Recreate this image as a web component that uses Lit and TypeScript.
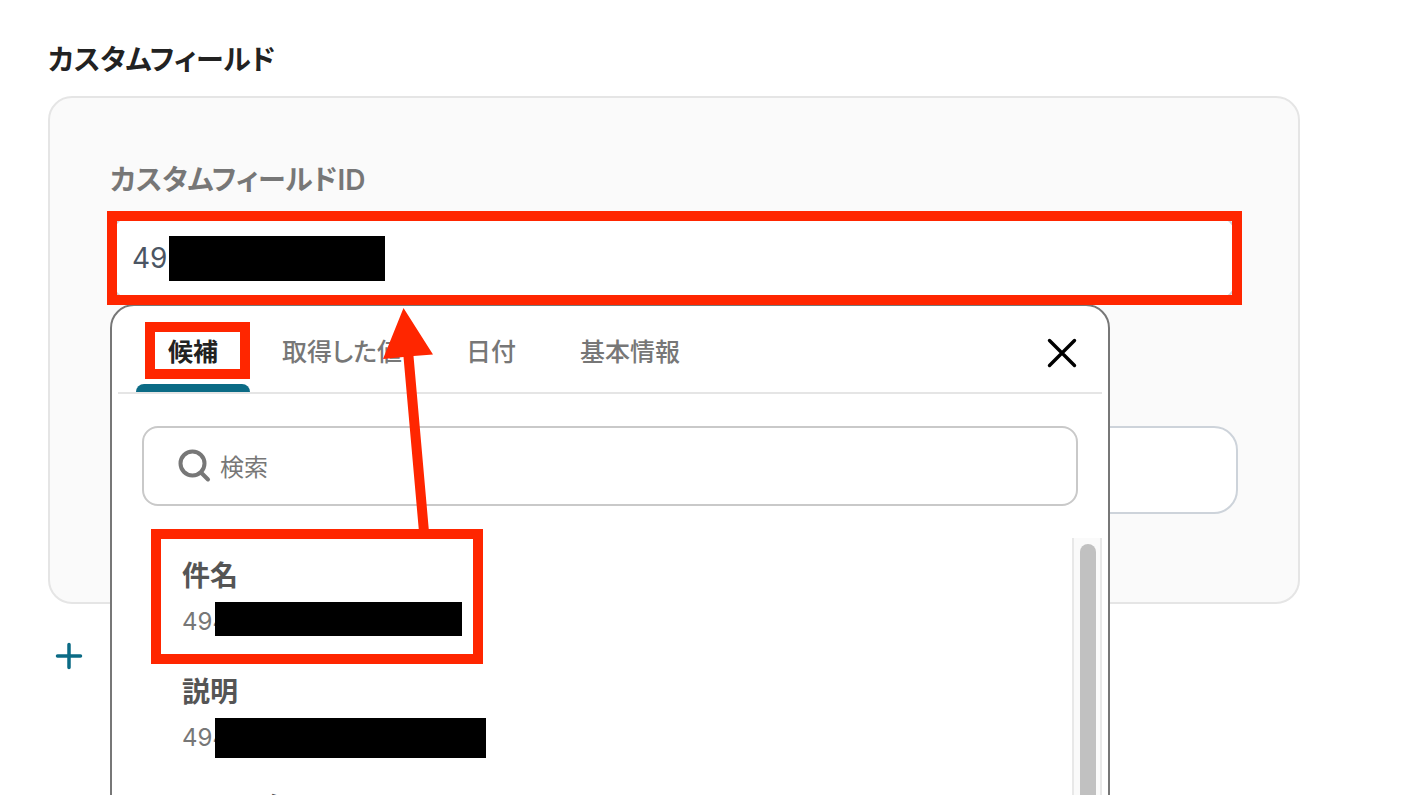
import { LitElement, html, css, svg } from "lit";
import { customElement, state } from "lit/decorators.js";

interface Candidate {
  name: string;
  value: string;
  mask: string;
}

const TABS = ["候補", "取得した値", "日付", "基本情報"];

const CANDIDATES: Candidate[] = [
  { name: "件名", value: "494", mask: "mask-subject" },
  { name: "説明", value: "494", mask: "mask-description" },
  { name: "ステータス", value: "494", mask: "mask-description" },
];

@customElement("suggest-panel")
export class SuggestPanel extends LitElement {
  @state() private active = 0;

  static styles = css`
    * {
      box-sizing: border-box;
    }
    :host {
      display: flex;
      flex-direction: column;
      background: #fff;
      border: 2px solid #777;
      border-radius: 24px;
      padding: 0 6px;
    }
    .header {
      display: flex;
      align-items: stretch;
      height: 88px;
      flex: none;
      border-bottom: 2px solid #e5e5e5;
      padding: 0 14px 0 18px;
    }
    button {
      font: inherit;
      border: 0;
      background: none;
      padding: 0;
      cursor: pointer;
    }
    .tabs {
      display: flex;
      flex: 1;
    }
    .tab {
      display: grid;
      grid-template-rows: 1fr 8px;
      color: #777;
      font-size: 25px;
      line-height: 36px;
      font-weight: 500;
    }
    .tab-text {
      padding: 28px 32px 0;
      text-align: left;
    }
    .tab.active {
      color: #222;
      font-weight: 600;
    }
    .tab.active::after {
      content: "";
      background: #0b6b85;
      border-radius: 8px 8px 0 0;
    }
    .close {
      padding: 8px 0 0;
      width: 44px;
    }
    .search {
      display: flex;
      align-items: center;
      flex: none;
      gap: 8px;
      height: 80px;
      margin: 32px 24px;
      padding: 0 32px;
      border: 2px solid #c9c9c9;
      border-radius: 16px;
    }
    .search input {
      flex: 1;
      min-width: 0;
      border: 0;
      outline: 0;
      padding: 2px 0 0;
      background: none;
      font: inherit;
      font-size: 24px;
      color: #222;
    }
    .search input::placeholder {
      color: #777;
      opacity: 1;
    }
    .body {
      display: flex;
      flex: 1;
      min-height: 0;
      overflow: hidden;
    }
    .list {
      flex: 1;
      list-style: none;
      margin: 0;
      padding: 0 64px;
    }
    .item {
      display: flex;
      flex-direction: column;
      height: 116px;
      padding-top: 16px;
    }
    .name {
      color: #555;
      font-size: 28px;
      font-weight: 600;
      line-height: 44px;
    }
    .value {
      display: flex;
      align-items: flex-start;
      color: #777;
      font-size: 24px;
      line-height: 48px;
    }
    .digits {
      width: 33px;
    }
    .mask-subject,
    .mask-description {
      position: relative;
      background: #000;
      margin-top: 4px;
    }
    .mask-subject {
      width: 247px;
      height: 34px;
    }
    .mask-description {
      width: 271px;
      height: 40px;
    }
    .track {
      width: 30px;
      padding: 6px 4px 0 6px;
      background: #fafafa;
      border: 2px solid #e8e8e8;
      border-width: 0 2px;
    }
    .thumb {
      height: 320px;
      background: #c1c1c1;
      border-radius: 8px;
    }
    svg {
      display: block;
    }
  `;

  render() {
    return html`
      <div class="header">
        <div class="tabs" role="tablist">
          ${TABS.map(
            (label, i) => html`<button
              class="tab ${i === this.active ? "active" : ""}"
              role="tab"
              aria-selected=${i === this.active}
              @click=${() => (this.active = i)}
            ><span class="tab-text">${label}</span></button>`,
          )}
        </div>
        <button class="close" aria-label="閉じる">
          <svg width="36" height="36" viewBox="0 0 36 36" fill="none" stroke="#000" stroke-width="3.4" stroke-linecap="round">
            <path d="M5.5 5.5 30.5 30.5M30.5 5.5 5.5 30.5" />
          </svg>
        </button>
      </div>
      <label class="search">
        <svg width="36" height="36" viewBox="0 0 36 36" fill="none" stroke="#777" stroke-width="4" stroke-linecap="round">
          <circle cx="16.5" cy="15.5" r="12" />
          <path d="M25 24.500 32 31.500" />
        </svg>
        <input type="text" placeholder="検索" aria-label="検索" />
      </label>
      <div class="body">
        <ul class="list">
          ${CANDIDATES.map(
            (c) => html`<li class="item">
              <span class="name">${c.name}</span>
              <span class="value"><span class="digits">${c.value}</span><span class=${c.mask}></span></span>
            </li>`,
          )}
        </ul>
        <div class="track"><div class="thumb"></div></div>
      </div>
    `;
  }
}

@customElement("app-root")
export class AppRoot extends LitElement {
  static styles = css`
    * {
      box-sizing: border-box;
    }
    :host {
      display: block;
      position: relative;
      height: 100vh;
      overflow: hidden;
      background: #fff;
      font-family: Inter, "Noto Sans CJK JP", sans-serif;
      font-feature-settings: "palt";
    }
    .page {
      padding: 38px 126px 0 48px;
    }
    h1 {
      margin: 0 0 14px;
      color: #222;
      font-size: 28px;
      line-height: 44px;
      font-weight: 600;
    }
    .card {
      padding: 60px 60px 88px;
      background: #fafafa;
      border: 2px solid #e5e5e5;
      border-radius: 24px;
    }
    .label {
      display: block;
      margin-bottom: 12px;
      color: #777;
      font-size: 28px;
      line-height: 44px;
      font-weight: 600;
    }
    .field {
      position: relative;
      margin-bottom: 124px;
    }
    .input {
      display: block;
      width: 100%;
      height: 88px;
      padding: 0 20px;
      background: #fff;
      border: 2px solid #cdd3da;
      border-radius: 24px;
      color: #4b5563;
      font: inherit;
      font-size: 28px;
    }
    .panel {
      position: absolute;
      top: calc(100% + 2px);
      left: 0;
      width: 1000px;
      max-width: 100%;
      height: 600px;
    }
    .add {
      display: block;
      margin: 38px 0 0 6px;
      padding: 0;
      border: 0;
      background: none;
      cursor: pointer;
    }
    .add svg {
      display: block;
    }
    .mark {
      position: absolute;
      border: 10px solid #ff2600;
      pointer-events: none;
    }
    .mark-field {
      inset: -3px -4px -3px -3px;
    }
    .mark-tab {
      left: 35px;
      top: 108px;
      width: 105px;
      height: 57px;
    }
    .mark-item {
      left: 41px;
      top: 315px;
      width: 332px;
      height: 135px;
    }
    .mask-field {
      position: absolute;
      left: 59px;
      top: 22px;
      width: 216px;
      height: 45px;
      background: #000;
    }
    .arrow {
      position: absolute;
      left: 270px;
      top: 92px;
      pointer-events: none;
    }
  `;

  render() {
    return html`
      <main class="page">
        <h1>カスタムフィールド</h1>
        <section class="card">
          <label class="label" for="field-id">カスタムフィールドID</label>
          <div class="field">
            <input class="input" id="field-id" type="text" value="49" />
            <div class="mask-field"></div>
            <suggest-panel class="panel"></suggest-panel>
            <div class="mark mark-field"></div>
            <div class="mark mark-tab"></div>
            <svg class="arrow" width="60" height="230" viewBox="0 0 60 230" fill="#ff2600">
              ${svg`<path d="M23.500 2 53 48.500 33.500 50 49 226 39 226 23.500 51 3 53Z" />`}
            </svg>
            <div class="mark mark-item"></div>
          </div>
          <input class="input" type="text" aria-label="値" />
        </section>
        <button class="add" aria-label="追加">
          <svg width="30" height="28" viewBox="0 0 30 28" fill="none" stroke="#0b6b85" stroke-width="3.500" stroke-linecap="round">
            <path d="M15 2.500V25.500M3.500 14H26.500" />
          </svg>
        </button>
      </main>
    `;
  }
}
